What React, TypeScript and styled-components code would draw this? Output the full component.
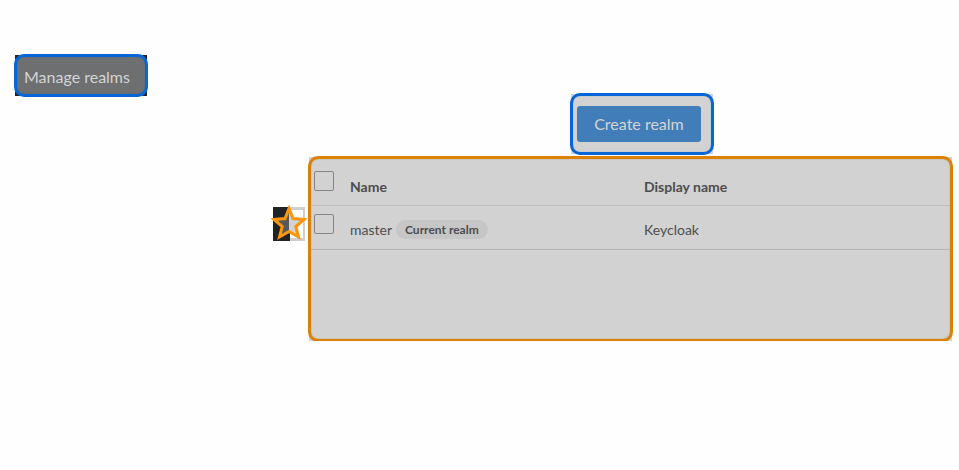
import React from "react";
import styled, { createGlobalStyle } from "styled-components";

const GlobalStyle = createGlobalStyle`
  * { box-sizing: border-box; }
  body {
    margin: 0;
    background: #fefefe;
    color: #4d4d4d;
    font-family: "Lato", "Liberation Sans", sans-serif;
    font-size: 14px;
  }
`;

const Page = styled.div`
  display: flex;
  align-items: flex-start;
`;

const Sidebar = styled.nav`
  flex: none;
  width: 273px;
  padding: 55px 0 0 15px;
`;

const Highlight = styled.div<{ $ring: string; $edge: string; $fill: string }>`
  position: relative;
  background: ${(p) => p.$fill};

  &::after {
    content: "";
    position: absolute;
    inset: -1px;
    border: 3px solid ${(p) => p.$ring};
    border-radius: 10px;
    box-shadow: inset 0 0 1px ${(p) => p.$edge};
    pointer-events: none;
  }
`;

const NavHighlight = styled(Highlight)`
  width: 132px;
  background: linear-gradient(#6e6f70, #6e6f70) center / 124px 100% no-repeat,
    linear-gradient(#6e6f70, #6e6f70) center / 100% 33px no-repeat, #202326;
`;

const NavLink = styled.a`
  display: block;
  padding: 12px 9px 9px;
  color: #d3d3d3;
  font-size: 16px;
  line-height: 20px;
  text-decoration: none;
  white-space: nowrap;
`;

const Marker = styled.div`
  flex: none;
  width: 36px;
  padding-top: 205px;
`;

const StarIcon = styled.svg`
  display: block;
  overflow: visible;
`;

const Main = styled.main`
  flex: 1;
  min-width: 0;
  padding: 94px 7px 0 0;
`;

const ActionHighlight = styled(Highlight)`
  width: 142px;
  height: 60px;
  margin: 0 0 3px 262px;
  padding: 12px 12px 12px 6px;
`;

const PrimaryButton = styled.button`
  display: block;
  width: 100%;
  height: 36px;
  padding: 0;
  border: 0;
  border-radius: 3px;
  background: #417eb9;
  color: #d3d3d3;
  font: 400 16px/20px "Lato", "Liberation Sans", sans-serif;
  white-space: nowrap;
`;

const TablePanel = styled(Highlight)`
  padding-bottom: 91px;
`;

const Table = styled.table`
  width: 100%;
  border-collapse: separate;
  border-spacing: 0;
  table-layout: fixed;
`;

const CheckColumn = styled.col`
  width: 41px;
`;

const NameColumn = styled.col`
  width: 294px;
`;

const HeadCell = styled.th`
  height: 49px;
  padding: 11px 0 0;
  border-bottom: 1px solid #bebebe;
  font-size: 14px;
  font-weight: 700;
  line-height: 20px;
  text-align: left;
`;

const Cell = styled.td`
  height: 44px;
  padding: 4px 0 0;
  border-bottom: 1px solid #b5b5b5;
  font-size: 14px;
  line-height: 20px;
`;

const Check = styled.input`
  appearance: none;
  display: block;
  width: 20px;
  height: 20px;
  margin: 0 0 12px 5px;
  border: 1px solid #858585;
  border-radius: 2px;
`;

const RealmName = styled.div`
  display: flex;
  align-items: center;
  gap: 4px;
`;

const Badge = styled.span`
  padding: 0 9px;
  border-radius: 10px;
  background: #c6c6c6;
  font-size: 12px;
  font-weight: 700;
  line-height: 19px;
`;

const ORANGE = "#db8205";
const BLUE = "#0666d8";

export default function App() {
  return (
    <>
      <GlobalStyle />
      <Page>
        <Sidebar>
          <NavHighlight $ring={BLUE} $edge="#205a9a" $fill="#6e6f70">
            <NavLink href="#realms">Manage realms</NavLink>
          </NavHighlight>
        </Sidebar>
        <Marker>
          <StarIcon width="36" height="38" viewBox="0 0 36 38" aria-hidden="true">
            <rect x="0" y="2" width="17" height="34" fill="#202326" />
            <rect x="17" y="2" width="15" height="34" fill="#cfcfd0" />
            <rect x="17" y="5" width="13" height="28" fill="#fff" />
            <path d="M16 3.5 20 13.5 31 14.5 23 21.5 25.5 32 16 26.5Z" fill="#d2d2d2" />
            <path d="M16 3.5 12 13.5 1 14.5 9.5 21.5 7 32 16 26.5Z" fill="#58595b" />
            <path
              d="M16 3.5 20 13.5 31 14.5 22.8 21.5 25.5 32 16 26.5 6.5 32 9.2 21.5 1 14.5 12 13.5Z"
              fill="none"
              stroke="#fa950c"
              strokeWidth="3"
            />
          </StarIcon>
        </Marker>
        <Main>
          <ActionHighlight $ring={BLUE} $edge="#6b9ace" $fill="#d2d2d2">
            <PrimaryButton type="button">Create realm</PrimaryButton>
          </ActionHighlight>
          <TablePanel $ring={ORANGE} $edge="#a66a14" $fill="#d2d2d2">
            <Table>
              <colgroup>
                <CheckColumn />
                <NameColumn />
                <col />
              </colgroup>
              <thead>
                <tr>
                  <HeadCell>
                    <Check type="checkbox" aria-label="Select all realms" />
                  </HeadCell>
                  <HeadCell scope="col">Name</HeadCell>
                  <HeadCell scope="col">Display name</HeadCell>
                </tr>
              </thead>
              <tbody>
                <tr>
                  <Cell>
                    <Check type="checkbox" aria-label="Select master" />
                  </Cell>
                  <Cell>
                    <RealmName>
                      master <Badge>Current realm</Badge>
                    </RealmName>
                  </Cell>
                  <Cell>Keycloak</Cell>
                </tr>
              </tbody>
            </Table>
          </TablePanel>
        </Main>
      </Page>
    </>
  );
}
